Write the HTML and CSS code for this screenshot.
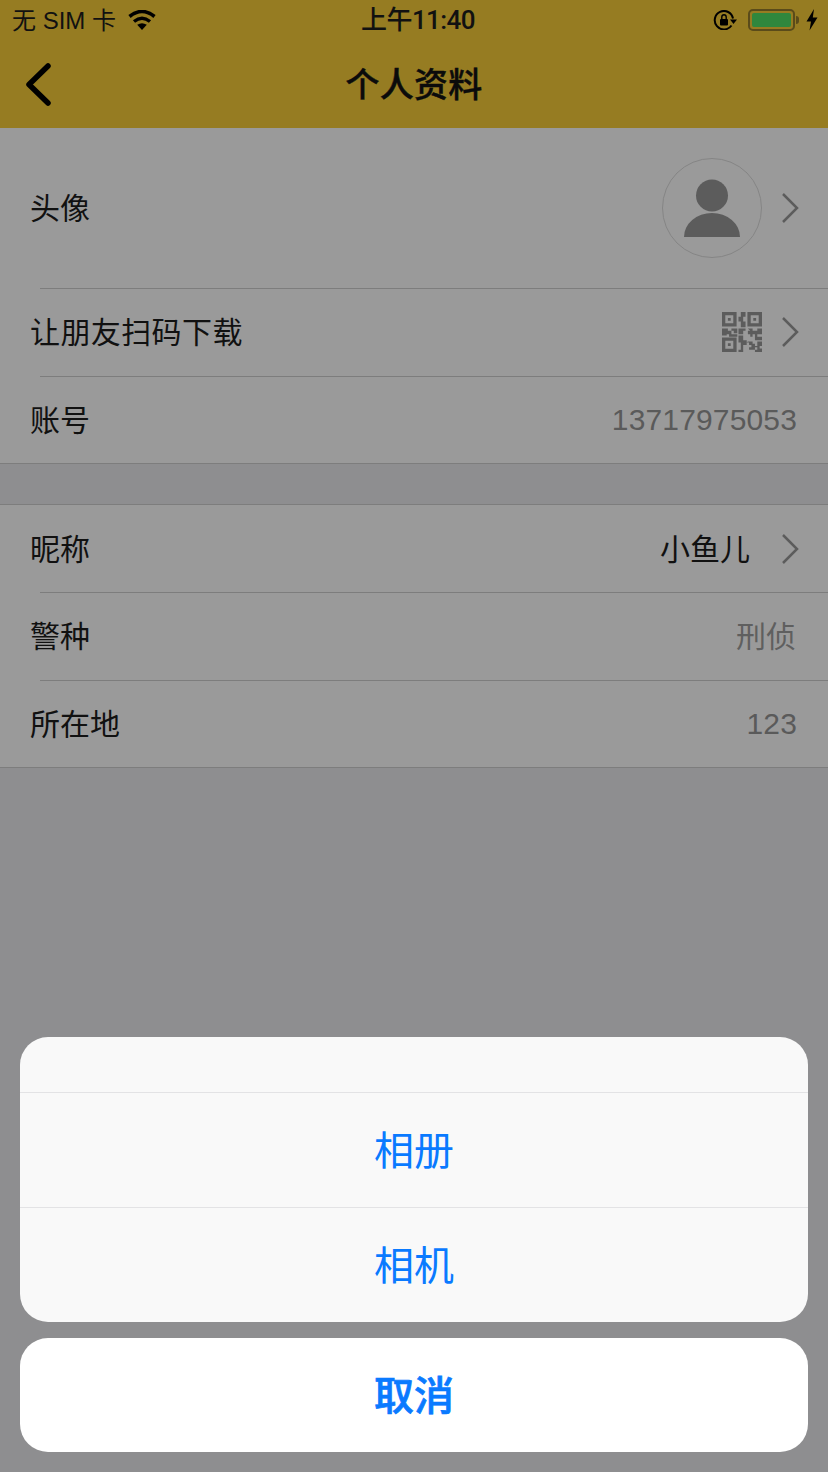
FILE: index.html
```html
<!DOCTYPE html>
<html lang="zh-CN">
<head>
  <meta charset="UTF-8" />
  <meta name="viewport" content="width=device-width, initial-scale=1.0"/>
  <title>个人资料</title>
  <link rel="stylesheet" href="styles.css">
</head>
<body>
  <header class="topbar">
    <div class="status">
      <div class="status-left">
        <span class="carrier">无 SIM 卡</span>
        <svg class="wifi" width="28" height="20" viewBox="0 0 28 20">
          <path d="M1.500 6.500Q14-3.500 26.500 6.500" fill="none" stroke="#000" stroke-width="3.600"/>
          <path d="M6 11.500Q14 5 22 11.500" fill="none" stroke="#000" stroke-width="3.400"/>
          <path d="M14 20 9.200 14.800Q14 11.500 18.800 14.800z"/>
        </svg>
      </div>
      <span class="clock">上午11:40</span>
      <div class="status-right">
        <svg class="lock" width="24" height="20" viewBox="0 0 24 20">
          <path d="M18.500 15.500A9.200 9.200 0 1 1 20 8.500" fill="none" stroke="#000" stroke-width="2"/>
          <path d="M17 9.500h7L20.500 14z"/>
          <rect x="7" y="9" width="8" height="6.500" rx="1"/>
          <path d="M8.800 9V7a2.200 2.200 0 0 1 4.400 0v2" fill="none" stroke="#000" stroke-width="1.400"/>
        </svg>
        <div class="battery"><div class="battery-fill"></div></div>
        <div class="battery-tip"></div>
        <svg class="bolt" width="12" height="22" viewBox="0 0 12 22">
          <path d="M8 0 .5 12.500H5L3.500 21.500 11.500 8.500H6.800z"/>
        </svg>
      </div>
    </div>
    <nav class="navbar">
      <svg class="back" width="28" height="44" viewBox="0 0 28 44">
        <path d="M24 4 5 22.500 24 41" fill="none" stroke="#000" stroke-width="5.500" stroke-linecap="round" stroke-linejoin="round"/>
      </svg>
      <h1>个人资料</h1>
    </nav>
  </header>

  <section class="group">
    <div class="row row-tall">
      <span class="label">头像</span>
      <div class="row-right">
        <div class="avatar">
          <svg width="58" height="58" viewBox="0 0 58 58">
            <circle cx="29" cy="16.500" r="16"/>
            <path d="M1 58A28 24 0 0 1 57 58z"/>
          </svg>
        </div>
        <svg class="chevron" width="18" height="32" viewBox="0 0 18 32">
          <path d="M2 2 16 16 2 30" fill="none" stroke-width="2.500"/>
        </svg>
      </div>
    </div>
    <div class="row">
      <span class="label label-wide">让朋友扫码下载</span>
      <div class="row-right">
        <svg class="qr" width="40" height="40" viewBox="0 0 17 17">
          <path d="M0 0h6.200v6.200H0zM1.400 1.400v3.400h3.400V1.400zM2.500 2.500h1.200v1.200H2.500z" fill-rule="evenodd"/>
          <path d="M10.800 0H17v6.200h-6.200zM12.200 1.400v3.400h3.400V1.400zM13.300 2.500h1.200v1.200h-1.200z" fill-rule="evenodd"/>
          <path d="M0 10.800h6.200V17H0zM1.400 12.200v3.400h3.400v-3.400zM2.500 13.300h1.200v1.200H2.500z" fill-rule="evenodd"/>
          <path d="M8 0h2v2H9v2h1v2.500H8V4H7V2h1zM7 7h3v1H9v1.500H7zM0 7h2.500v1H4v1.500H2V10H0zM4 7h2.500v2H5V8H4zM3 9.500h3.500V10.500H3zM11 7h2v1h2V7h2v2.500h-2v1h2v1.500h-3V9.500h-1v1h-1v-1h-1V8h1zM7 10h2v2h1.500v2H9v3H7v-1h1v-3H7zM11 12.500h2v1h1v1h1v-2h2v2h-1v1h1V17h-3v-1h1v-1h-1v1h-2.500v-1h1v-1h-1v-1h-1z"/>
        </svg>
        <svg class="chevron" width="18" height="32" viewBox="0 0 18 32">
          <path d="M2 2 16 16 2 30" fill="none" stroke-width="2.500"/>
        </svg>
      </div>
    </div>
    <div class="row">
      <span class="label">账号</span>
      <span class="value value-num">13717975053</span>
    </div>
  </section>

  <section class="group group-second">
    <div class="row">
      <span class="label">昵称</span>
      <div class="row-right">
        <span class="value value-dark">小鱼儿</span>
        <svg class="chevron" width="18" height="32" viewBox="0 0 18 32">
          <path d="M2 2 16 16 2 30" fill="none" stroke-width="2.500"/>
        </svg>
      </div>
    </div>
    <div class="row">
      <span class="label">警种</span>
      <span class="value">刑侦</span>
    </div>
    <div class="row">
      <span class="label">所在地</span>
      <span class="value value-num">123</span>
    </div>
  </section>

  <div class="sheet">
    <div class="sheet-card">
      <div class="sheet-title"></div>
      <button class="sheet-btn">相册</button>
      <button class="sheet-btn">相机</button>
    </div>
    <button class="sheet-btn sheet-cancel">取消</button>
  </div>
</body>
</html>
```

FILE: styles.css
```css
* {
  box-sizing: border-box;
}
html, body {
  height: 100%;
}
body {
  margin: 0;
  position: relative;
  overflow: hidden;
  background-color: #8e8e90;
  color: #000;
  font-family: "Liberation Sans", "Noto Sans CJK SC", sans-serif;
}

/* top bar */
.topbar {
  height: 128px;
  background-color: #967c22;
}
.topbar svg {
  fill: #000;
}
.status {
  position: relative;
  height: 40px;
  display: flex;
  justify-content: space-between;
  align-items: center;
  padding: 0 10px 0 12px;
}
.status-left, .status-right {
  display: flex;
  align-items: center;
}
.carrier {
  margin-bottom: 4px;
  font-size: 24px;
  color: #111;
}
.wifi {
  margin-left: 12px;
}
.clock {
  position: absolute;
  left: 8px;
  right: 0;
  top: 3px;
  text-align: center;
  font-family: Roboto, "Noto Sans CJK SC", sans-serif;
  font-size: 26px;
  line-height: 34px;
  font-weight: 500;
  letter-spacing: -0.6px;
  color: #111;
  pointer-events: none;
}
.lock {
  margin-right: 11px;
}
.battery {
  width: 47px;
  height: 22px;
  padding: 2px;
  border: 2px solid #5a4b1a;
  border-radius: 5px;
}
.battery-fill {
  height: 100%;
  background-color: #2f873d;
  border-radius: 2px;
}
.battery-tip {
  width: 3px;
  height: 8px;
  margin-left: 1px;
  background-color: #5a4b1a;
  border-radius: 0 3px 3px 0;
}
.bolt {
  margin-left: 7px;
}
.navbar {
  position: relative;
  height: 88px;
  display: flex;
  align-items: center;
  justify-content: center;
}
.navbar h1 {
  margin: 0 0 4px;
  font-size: 34px;
  font-weight: 500;
  letter-spacing: 0.3px;
  color: #0b0b0b;
  -webkit-text-stroke: 0.4px #0b0b0b;
}
.back {
  position: absolute;
  left: 24px;
  top: 22px;
}

/* list groups */
.group {
  background-color: #9a9a9a;
  border-bottom: 1px solid #7d7d7d;
}
.group-second {
  margin-top: 40px;
  border-top: 1px solid #7d7d7d;
}
.row {
  position: relative;
  height: 88px;
  display: flex;
  align-items: center;
  justify-content: space-between;
  padding: 0 32px 0 30px;
}
.row:last-child, .group-second .row:first-child {
  height: 87px;
}
.row-tall {
  height: 160px;
}
.row + .row::before {
  content: "";
  position: absolute;
  left: 40px;
  right: 0;
  top: 0;
  height: 1px;
  background-color: #7d7d7d;
}
.label {
  margin-bottom: 4px;
  font-size: 30px;
  color: #111;
}
.label-wide {
  letter-spacing: 0.4px;
}
.row-right {
  display: flex;
  align-items: center;
}
.value {
  margin-bottom: 4px;
  font-size: 30px;
  color: #5f5f5f;
}
.value-num {
  margin-bottom: 0;
  margin-right: -1px;
  letter-spacing: 0.15px;
  color: #5a5a5a;
}
.value-dark {
  color: #111;
}
.avatar {
  width: 100px;
  height: 100px;
  border: 1px solid #858585;
  border-radius: 50%;
  display: flex;
  align-items: center;
  justify-content: center;
}
.avatar svg {
  fill: #5c5c5c;
}
.qr {
  fill: #5c5c5c;
}
.chevron {
  stroke: #5c5c5c;
  margin-left: 19px;
  margin-right: -3px;
}
.row-right .value + .chevron {
  margin-left: 31px;
}

/* action sheet */
.sheet {
  position: absolute;
  left: 20px;
  right: 20px;
  bottom: 20px;
  display: flex;
  flex-direction: column;
  gap: 16px;
}
.sheet-card {
  background-color: #f9f9f9;
  border-radius: 28px;
  overflow: hidden;
}
.sheet-title {
  height: 55px;
}
.sheet-btn {
  display: block;
  width: 100%;
  height: 115px;
  padding: 0 0 4px;
  border: none;
  border-top: 1px solid #e3e3e5;
  background: none;
  color: #0a7aff;
  font-family: "Liberation Sans", "Noto Sans CJK SC", sans-serif;
  font-size: 40px;
}
.sheet-cancel {
  height: 114px;
  border-top: none;
  background-color: #fff;
  border-radius: 28px;
  font-weight: 500;
  -webkit-text-stroke: 0.7px #0a7aff;
}
```
